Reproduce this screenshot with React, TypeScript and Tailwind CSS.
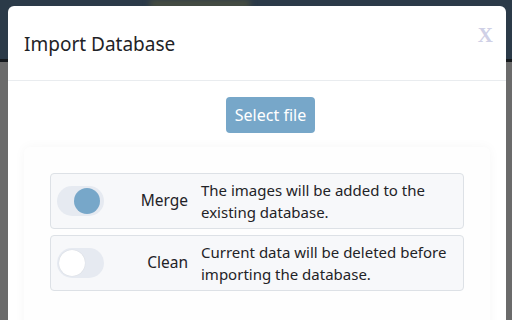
import React from "react";

function Toggle({ on }: { on: boolean }) {
  return (
    <div className="relative h-[30px] w-[47px] shrink-0 rounded-full bg-[#e6eaf1]">
      <div
        className={
          on
            ? "absolute right-[4px] top-[2px] h-[26px] w-[26px] rounded-full bg-[#77a7c9]"
            : "absolute left-[2px] top-[2px] h-[26px] w-[26px] rounded-full bg-white shadow-[0_0_1px_rgba(0,0,0,0.15)]"
        }
      />
    </div>
  );
}

function Row({ on, label, lines }: { on: boolean; label: string; lines: string[] }) {
  return (
    <div className="flex h-[56px] items-center rounded-[4px] border border-[#dde1e6] bg-[#f7f8fa] pl-[6px]">
      <Toggle on={on} />
      <div className="w-[97px] pr-[13px] text-right text-[15.5px] text-[#1f2327]">{label}</div>
      <div className="text-[15px] leading-[22px] text-[#1f2327]">
        {lines.map((l) => (
          <div key={l}>{l}</div>
        ))}
      </div>
    </div>
  );
}

export default function App() {
  return (
    <div
      className="relative h-[320px] w-[512px] overflow-hidden bg-[#6b6b6b]"
      style={{ fontFamily: '"Noto Sans", "Open Sans", sans-serif' }}
    >
      <div className="h-[62px] border-b-[3px] border-[#15191d] bg-[#2b3a48]">
        <div className="ml-[150px] h-[8px] w-[100px] bg-[#4a5040] blur-[3px]" />
      </div>
      <div className="absolute left-[8px] top-[6px] h-[330px] w-[498px] rounded-[6px] bg-white">
        <div className="relative flex h-[75px] items-center border-b border-[#e9ecef] pl-[16px] pt-[3px]">
          <div className="text-[19px] text-[#1f2327]">Import Database</div>
          <div
            className="absolute right-[13px] top-[14px] text-[21px] font-bold text-[#cfd0e6]"
            style={{ fontFamily: '"Liberation Serif", serif' }}
          >
            X
          </div>
        </div>
        <div className="px-[16px] pt-[16px]">
          <div className="flex pl-[202px]">
            <div className="flex h-[36px] w-[89px] items-center justify-center rounded-[4px] bg-[#77a7c9] text-[16px] text-white">
              Select file
            </div>
          </div>
          <div className="mt-[14px] h-[200px] rounded-[6px] bg-[#fefefe] px-[26px] pt-[26px] shadow-[0_0_12px_rgba(0,0,0,0.04)]">
            <div className="flex flex-col gap-[6px]">
              <Row on={true} label="Merge" lines={["The images will be added to the", "existing database."]} />
              <Row on={false} label="Clean" lines={["Current data will be deleted before", "importing the database."]} />
            </div>
          </div>
        </div>
      </div>
    </div>
  );
}
